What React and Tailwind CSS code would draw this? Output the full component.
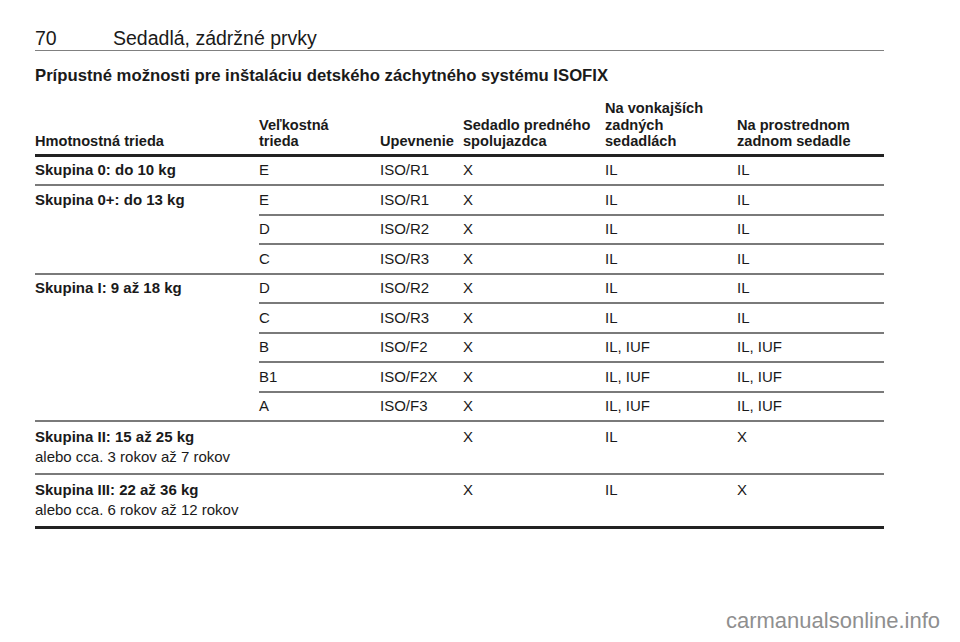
import React from "react";

const groups = [
  { name: "Skupina 0: do 10 kg", rows: [["E", "ISO/R1", "X", "IL", "IL"]] },
  {
    name: "Skupina 0+: do 13 kg",
    rows: [
      ["E", "ISO/R1", "X", "IL", "IL"],
      ["D", "ISO/R2", "X", "IL", "IL"],
      ["C", "ISO/R3", "X", "IL", "IL"],
    ],
  },
  {
    name: "Skupina I: 9 až 18 kg",
    rows: [
      ["D", "ISO/R2", "X", "IL", "IL"],
      ["C", "ISO/R3", "X", "IL", "IL"],
      ["B", "ISO/F2", "X", "IL, IUF", "IL, IUF"],
      ["B1", "ISO/F2X", "X", "IL, IUF", "IL, IUF"],
      ["A", "ISO/F3", "X", "IL, IUF", "IL, IUF"],
    ],
  },
];

// skupiny s vekom v druhom riadku
const ageGroups = [
  { name: "Skupina II: 15 až 25 kg", age: "alebo cca. 3 rokov až 7 rokov", vals: ["X", "IL", "X"] },
  { name: "Skupina III: 22 až 36 kg", age: "alebo cca. 6 rokov až 12 rokov", vals: ["X", "IL", "X"] },
];

const Row = ({ cells }) => (
  <div className="flex h-[29.5px] items-center border-b-2 border-[#7a7a7a]">
    <div className="w-[121px]">{cells[0]}</div>
    <div className="w-[83px]">{cells[1]}</div>
    <div className="w-[142px]">{cells[2]}</div>
    <div className="w-[132px]">{cells[3]}</div>
    <div className="flex-1">{cells[4]}</div>
  </div>
);

const App = () => {
  return (
    <div className="min-h-[642px] bg-white text-[#1a1a1a] font-['Liberation_Sans',Arial,sans-serif]">
      <div className="ml-[35px] w-[849px] pt-[27px]">
        {/* page header */}
        <div className="flex pb-[1px] border-b-[1.5px] border-[#808080] text-[19.5px] leading-[22px]">
          <span className="w-[78px]">70</span>
          <span>Sedadlá, zádržné prvky</span>
        </div>

        <h2 className="mt-[15px] text-[16.7px] leading-[20px] font-bold">
          Prípustné možnosti pre inštaláciu detského záchytného systému ISOFIX
        </h2>

        {/* table header */}
        <div className="mt-[14px] flex items-end pb-[4px] border-b-[3px] border-[#222] text-[14.6px] leading-[16.5px] font-bold">
          <div className="w-[224px]">Hmotnostná trieda</div>
          <div className="w-[121px]">
            Veľkostná
            <br />
            trieda
          </div>
          <div className="w-[83px]">Upevnenie</div>
          <div className="w-[142px]">
            Sedadlo predného
            <br />
            spolujazdca
          </div>
          <div className="w-[132px]">
            Na vonkajších
            <br />
            zadných
            <br />
            sedadlách
          </div>
          <div className="flex-1">
            Na prostrednom
            <br />
            zadnom sedadle
          </div>
        </div>

        {/* table body */}
        <div className="border-b-[3px] border-[#222] text-[15px] leading-[20px]">
          {groups.map((g) => (
            <div key={g.name} className="flex border-b-2 border-[#7a7a7a]">
              <div className="w-[224px] h-[27.5px] flex items-center font-bold">{g.name}</div>
              <div className="flex-1 -mb-[2px]">
                {g.rows.map((r, i) => (
                  <Row key={i} cells={r} />
                ))}
              </div>
            </div>
          ))}
          {ageGroups.map((g, i) => (
            <div
              key={g.name}
              className={
                "flex pt-[5px] " +
                (i < ageGroups.length - 1 ? "h-[53px] border-b-2 border-[#7a7a7a]" : "h-[51px]")
              }
            >
              <div className="w-[428px]">
                <div className="font-bold">{g.name}</div>
                <div>{g.age}</div>
              </div>
              <div className="w-[142px]">{g.vals[0]}</div>
              <div className="w-[132px]">{g.vals[1]}</div>
              <div className="flex-1">{g.vals[2]}</div>
            </div>
          ))}
        </div>
      </div>

      <div className="mt-[79px] flex justify-end pr-[20px] text-[22px] leading-[26px] text-[#8f8f8f]">
        carmanualsonline.info
      </div>
    </div>
  );
};

export default App;
